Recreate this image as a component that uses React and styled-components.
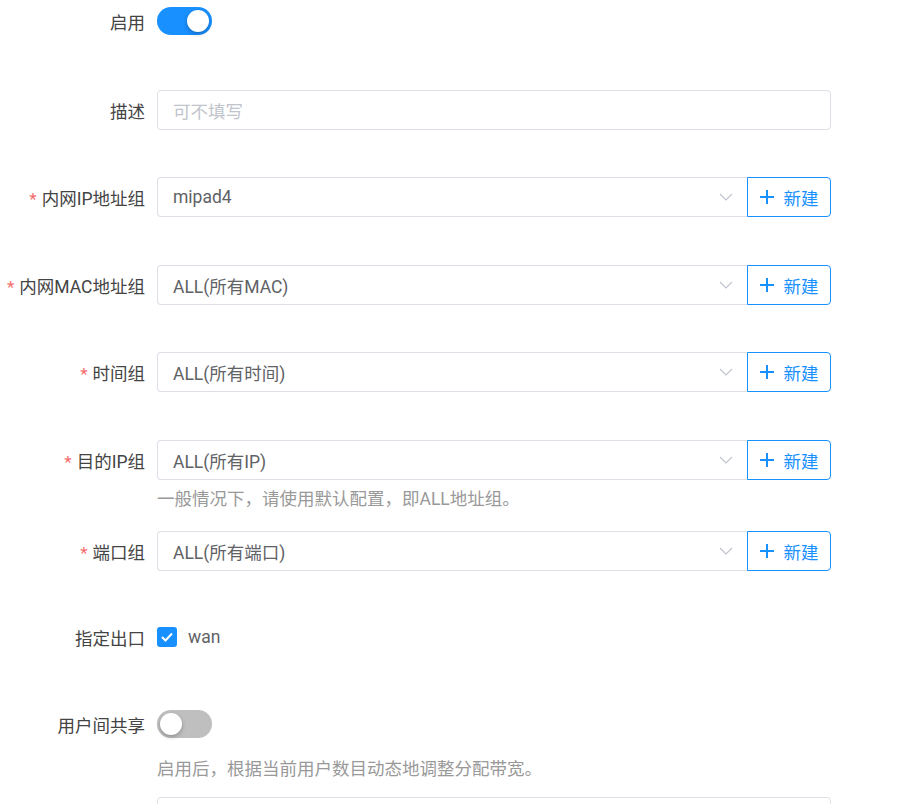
import React from "react";
import styled, { createGlobalStyle } from "styled-components";

const GlobalStyle = createGlobalStyle`
  body {
    margin: 0;
    background: #fff;
    font-family: Roboto, "Noto Sans CJK SC", sans-serif;
    font-size: 17.5px;
    color: #444;
  }
`;

const SForm = styled.div`
  padding-top: 1px;
  width: 831px;
`;

const SItem = styled.div`
  display: flex;
  align-items: flex-start;
  margin-bottom: ${(p) => p.$mb || 48}px;
`;

const SLabel = styled.div`
  width: 145px;
  flex-shrink: 0;
  height: ${(p) => p.$h || 40}px;
  display: flex;
  align-items: center;
  justify-content: flex-end;
  padding-right: 12px;
  color: #444;
  white-space: nowrap;
`;

const SStar = styled.span`
  color: #f56c6c;
  margin-right: 5px;
  font-size: 17px;
  margin-top: 3px;
`;

const SBody = styled.div`
  flex: 1;
  display: flex;
  flex-direction: column;
`;

const SControl = styled.div`
  height: ${(p) => p.$h || 40}px;
  display: flex;
  align-items: center;
`;

const SSwitch = styled.div`
  width: 55px;
  height: 28px;
  border-radius: 14px;
  background: ${(p) => (p.$on ? "#1890ff" : "#bfbfbf")};
  position: relative;
`;

const SKnob = styled.div`
  position: absolute;
  top: 3px;
  left: ${(p) => (p.$on ? "30px" : "3px")};
  width: 22px;
  height: 22px;
  border-radius: 50%;
  background: #fff;
  box-shadow: 0 2px 4px rgba(0, 0, 0, 0.25);
`;

const SInput = styled.div`
  box-sizing: border-box;
  width: 100%;
  height: 40px;
  border: 1px solid #dcdfe6;
  border-radius: 4px;
  padding: 0 15px;
  display: flex;
  align-items: center;
  color: ${(p) => (p.$placeholder ? "#c0c4cc" : "#606266")};
`;

const SSelect = styled.div`
  box-sizing: border-box;
  flex: 1;
  height: 40px;
  border: 1px solid #dcdfe6;
  border-right: none;
  border-radius: 4px 0 0 4px;
  padding: 0 14px 0 15px;
  display: flex;
  align-items: center;
  justify-content: space-between;
  color: #606266;
`;

const SButton = styled.div`
  box-sizing: border-box;
  width: 84px;
  height: 40px;
  border: 1px solid #1890ff;
  border-radius: 0 4px 4px 0;
  display: flex;
  align-items: center;
  justify-content: center;
  gap: 10px;
  color: #1890ff;
`;

const SHint = styled.div`
  color: #999;
  line-height: 22px;
  margin-top: ${(p) => p.$mt || 8}px;
`;

const SCheckbox = styled.div`
  width: 20px;
  height: 20px;
  border-radius: 3px;
  background: #1890ff;
  display: flex;
  align-items: center;
  justify-content: center;
  margin-right: 11px;
`;

const SCheckText = styled.span`
  color: #606266;
`;

const Chevron = () => (
  <svg width="14" height="8" viewBox="0 0 14 8" fill="none">
    <path d="M1 1l6 6 6-6" stroke="#c0c4cc" strokeWidth="1.2" />
  </svg>
);

const Plus = () => (
  <svg width="14" height="14" viewBox="0 0 14 14">
    <path d="M7 0v14M0 7h14" stroke="#1890ff" strokeWidth="2" />
  </svg>
);

const SelectRow = ({ label, value, hint, mb }) => (
  <SItem $mb={mb}>
    <SLabel>
      <SStar>*</SStar>
      {label}
    </SLabel>
    <SBody>
      <SControl>
        <SSelect>
          <span>{value}</span>
          <Chevron />
        </SSelect>
        <SButton>
          <Plus />
          <span>新建</span>
        </SButton>
      </SControl>
      {hint && <SHint>{hint}</SHint>}
    </SBody>
  </SItem>
);

export default function App() {
  return (
    <>
      <GlobalStyle />
      <SForm>
        <SItem $mb={49}>
          <SLabel>启用</SLabel>
          <SBody>
            <SControl>
              <SSwitch $on>
                <SKnob $on />
              </SSwitch>
            </SControl>
          </SBody>
        </SItem>

        <SItem $mb={47}>
          <SLabel>描述</SLabel>
          <SBody>
            <SInput $placeholder>可不填写</SInput>
          </SBody>
        </SItem>

        <SelectRow label="内网IP地址组" value="mipad4" />
        <SelectRow label="内网MAC地址组" value="ALL(所有MAC)" mb={47} />
        <SelectRow label="时间组" value="ALL(所有时间)" />
        <SelectRow
          label="目的IP组"
          value="ALL(所有IP)"
          hint="一般情况下，请使用默认配置，即ALL地址组。"
          mb={21}
        />
        <SelectRow label="端口组" value="ALL(所有端口)" />

        <SItem $mb={49}>
          <SLabel $h={36}>指定出口</SLabel>
          <SBody>
            <SControl $h={36}>
              <SCheckbox>
                <svg width="12" height="10" viewBox="0 0 12 10" fill="none">
                  <path d="M1 5l3.5 3.5L11 1.5" stroke="#fff" strokeWidth="2" />
                </svg>
              </SCheckbox>
              <SCheckText>wan</SCheckText>
            </SControl>
          </SBody>
        </SItem>

        <SItem $mb={17}>
          <SLabel>用户间共享</SLabel>
          <SBody>
            <SControl>
              <SSwitch>
                <SKnob />
              </SSwitch>
            </SControl>
            <SHint $mt={14}>启用后，根据当前用户数目动态地调整分配带宽。</SHint>
          </SBody>
        </SItem>

        <SItem>
          <SLabel />
          <SBody>
            <SInput />
          </SBody>
        </SItem>
      </SForm>
    </>
  );
}
